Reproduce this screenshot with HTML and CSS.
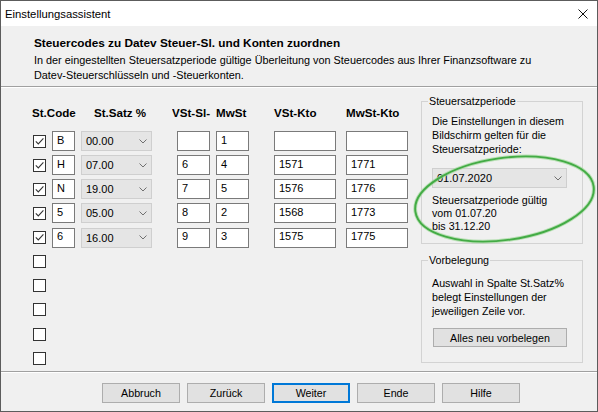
FILE: index.html
```html
<!DOCTYPE html>
<html lang="de">
<head>
<meta charset="utf-8">
<title>Einstellungsassistent</title>
<link rel="stylesheet" href="styles.css">
</head>
<body>
<div class="window">
  <div class="titlebar">
    <span class="title">Einstellungsassistent</span>
    <svg class="close" width="10" height="10" viewBox="0 0 10 10"><path d="M0.5 0.5L9.5 9.5M9.5 0.5L0.5 9.5" stroke="#111" stroke-width="1" fill="none"/></svg>
  </div>
  <div class="header">
    <div class="h-title">Steuercodes zu Datev Steuer-Sl. und Konten zuordnen</div>
    <div class="h-desc">In der eingestellten Steuersatzperiode gültige Überleitung von Steuercodes aus Ihrer Finanzsoftware zu<br>Datev-Steuerschlüsseln und -Steuerkonten.</div>
  </div>
  <div class="sep"></div>
  <div class="main">
    <div class="grid">
      <div class="colheads">
        <span class="ch ch-code">St.Code</span>
        <span class="ch ch-satz">St.Satz %</span>
        <span class="ch ch-vsl">VSt-Sl-</span>
        <span class="ch ch-mwst">MwSt</span>
        <span class="ch ch-vkto">VSt-Kto</span>
        <span class="ch ch-mkto">MwSt-Kto</span>
      </div>
      <div class="rows">
        <div class="row">
          <span class="cb"><svg viewBox="0 0 11 11"><path d="M1.8 5.4L4.3 7.9L9.4 2.4" stroke="#333" stroke-width="1.1" fill="none"/></svg></span>
          <span class="field f-code">B</span>
          <span class="combo f-satz">00.00<svg class="chev" viewBox="0 0 8 5"><path d="M0.5 0.5L4 4L7.5 0.5" stroke="#707070" fill="none"/></svg></span>
          <span class="field f-vsl"></span>
          <span class="field f-mwst">1</span>
          <span class="field f-vkto"></span>
          <span class="field f-mkto"></span>
        </div>
        <div class="row">
          <span class="cb"><svg viewBox="0 0 11 11"><path d="M1.8 5.4L4.3 7.9L9.4 2.4" stroke="#333" stroke-width="1.1" fill="none"/></svg></span>
          <span class="field f-code">H</span>
          <span class="combo f-satz">07.00<svg class="chev" viewBox="0 0 8 5"><path d="M0.5 0.5L4 4L7.5 0.5" stroke="#707070" fill="none"/></svg></span>
          <span class="field f-vsl">6</span>
          <span class="field f-mwst">4</span>
          <span class="field f-vkto">1571</span>
          <span class="field f-mkto">1771</span>
        </div>
        <div class="row">
          <span class="cb"><svg viewBox="0 0 11 11"><path d="M1.8 5.4L4.3 7.9L9.4 2.4" stroke="#333" stroke-width="1.1" fill="none"/></svg></span>
          <span class="field f-code">N</span>
          <span class="combo f-satz">19.00<svg class="chev" viewBox="0 0 8 5"><path d="M0.5 0.5L4 4L7.5 0.5" stroke="#707070" fill="none"/></svg></span>
          <span class="field f-vsl">7</span>
          <span class="field f-mwst">5</span>
          <span class="field f-vkto">1576</span>
          <span class="field f-mkto">1776</span>
        </div>
        <div class="row">
          <span class="cb"><svg viewBox="0 0 11 11"><path d="M1.8 5.4L4.3 7.9L9.4 2.4" stroke="#333" stroke-width="1.1" fill="none"/></svg></span>
          <span class="field f-code">5</span>
          <span class="combo f-satz">05.00<svg class="chev" viewBox="0 0 8 5"><path d="M0.5 0.5L4 4L7.5 0.5" stroke="#707070" fill="none"/></svg></span>
          <span class="field f-vsl">8</span>
          <span class="field f-mwst">2</span>
          <span class="field f-vkto">1568</span>
          <span class="field f-mkto">1773</span>
        </div>
        <div class="row">
          <span class="cb"><svg viewBox="0 0 11 11"><path d="M1.8 5.4L4.3 7.9L9.4 2.4" stroke="#333" stroke-width="1.1" fill="none"/></svg></span>
          <span class="field f-code">6</span>
          <span class="combo f-satz">16.00<svg class="chev" viewBox="0 0 8 5"><path d="M0.5 0.5L4 4L7.5 0.5" stroke="#707070" fill="none"/></svg></span>
          <span class="field f-vsl">9</span>
          <span class="field f-mwst">3</span>
          <span class="field f-vkto">1575</span>
          <span class="field f-mkto">1775</span>
        </div>
        <div class="row"><span class="cb"></span></div>
        <div class="row"><span class="cb"></span></div>
        <div class="row"><span class="cb"></span></div>
        <div class="row"><span class="cb"></span></div>
        <div class="row"><span class="cb"></span></div>
      </div>
    </div>
    <div class="side">
      <fieldset class="group g1">
        <legend>Steuersatzperiode</legend>
        <p class="gtext">Die Einstellungen in diesem<br>Bildschirm gelten für die<br>Steuersatzperiode:</p>
        <div class="combo c-period">01.07.2020<svg class="chev" viewBox="0 0 8 5"><path d="M0.5 0.5L4 4L7.5 0.5" stroke="#707070" fill="none"/></svg></div>
        <p class="gtext valid">Steuersatzperiode gültig<br>vom 01.07.20<br>bis 31.12.20</p>
      </fieldset>
      <fieldset class="group g2">
        <legend>Vorbelegung</legend>
        <p class="gtext">Auswahl in Spalte St.Satz%<br>belegt Einstellungen der<br>jeweiligen Zeile vor.</p>
        <div class="btn btn-wide">Alles neu vorbelegen</div>
      </fieldset>
    </div>
  </div>
  <div class="sep"></div>
  <div class="footer">
    <div class="btn">Abbruch</div>
    <div class="btn">Zurück</div>
    <div class="btn btn-default">Weiter</div>
    <div class="btn">Ende</div>
    <div class="btn">Hilfe</div>
  </div>
  <svg class="mark" width="598" height="412" viewBox="0 0 598 412">
    <ellipse cx="504.5" cy="199" rx="90" ry="41" transform="rotate(-8 504.5 199)" fill="none" stroke="#9fd99a" stroke-width="3.8" opacity="0.7"/>
    <ellipse cx="504.5" cy="199" rx="90" ry="41" transform="rotate(-8 504.5 199)" fill="none" stroke="#43ab45" stroke-width="1.9"/>
  </svg>
</div>
</body>
</html>
```

FILE: styles.css
```css
html, body {
  margin: 0;
  padding: 0;
  background: #f0f0f0;
}

.window {
  position: relative;
  width: 598px;
  height: 412px;
  box-sizing: border-box;
  border: 1px solid #5c5c5c;
  background: #f0f0f0;
  display: flex;
  flex-direction: column;
  font-family: "Liberation Sans", Arial, sans-serif;
  font-size: 10.7px;
  color: #000;
  overflow: hidden;
}

.titlebar {
  height: 25px;
  flex: none;
  background: #fff;
  display: flex;
  align-items: center;
  justify-content: space-between;
  padding: 0 9px 0 4px;
}

.title {
  font-size: 11.3px;
}

.close {
  display: block;
  margin-top: 1px;
}

.header {
  height: 60px;
  flex: none;
  box-sizing: border-box;
  padding: 10px 0 0 33px;
}

.h-title {
  font-weight: bold;
  font-size: 11.8px;
  line-height: 14px;
}

.h-desc {
  margin-top: 3px;
  line-height: 15px;
  font-size: 10.85px;
}

.sep {
  flex: none;
  height: 0;
  border-top: 1px solid #a0a0a0;
  border-bottom: 1px solid #ffffff;
}

.main {
  height: 283px;
  flex: none;
  display: flex;
}

.grid {
  padding: 18px 0 0 32px;
}

.colheads {
  display: flex;
  margin-left: -1px;
  font-weight: bold;
  font-size: 11.6px;
  line-height: 14px;
  white-space: nowrap;
}

.ch { display: block; }
.ch-code { width: 62px; }
.ch-satz { width: 78px; }
.ch-vsl { width: 44px; overflow: hidden; }
.ch-mwst { width: 58px; }
.ch-vkto { width: 72px; }

.rows {
  margin-top: 11px;
  display: flex;
  flex-direction: column;
  gap: 4.15px;
}

.row {
  height: 20px;
  display: flex;
  align-items: center;
}

.cb {
  width: 13px;
  height: 13px;
  box-sizing: border-box;
  border: 1px solid #333;
  background: #fff;
  display: block;
}

.cb svg {
  display: block;
  width: 11px;
  height: 11px;
}

.field {
  height: 20px;
  box-sizing: border-box;
  border: 1px solid #7a7a7a;
  background: #fff;
  padding: 0 0 3px 4px;
  display: flex;
  align-items: center;
  font-size: 11px;
}

.f-code { width: 23px; margin-left: 6px; }
.f-vsl { width: 33px; margin-left: 25px; }
.f-mwst { width: 33px; margin-left: 6px; }
.f-vkto { width: 62px; margin-left: 25px; }
.f-mkto { width: 62px; margin-left: 10px; }

.combo {
  height: 20px;
  box-sizing: border-box;
  border: 1px solid #cfcfcf;
  background: #e5e5e5;
  display: flex;
  align-items: center;
  justify-content: space-between;
  padding: 0 4px 0 4px;
  font-size: 11px;
}

.f-satz {
  width: 71px;
  margin-left: 6px;
}

.chev {
  display: block;
  width: 8px;
  height: 5px;
}

.side {
  margin-left: auto;
  margin-right: 14px;
  width: 162px;
  padding-top: 7px;
}

.group {
  margin: 0;
  width: 162px;
  box-sizing: border-box;
  border: 1px solid #d3d3d3;
  padding: 7px 15px 10px 10px;
  min-inline-size: 0;
}

.group legend {
  padding: 0 1px;
  margin-left: -4px;
  line-height: 12.2px;
}

.gtext {
  margin: 0;
  line-height: 14px;
  white-space: nowrap;
}

.c-period {
  margin-top: 12px;
  width: 135px;
  padding-left: 4px;
}

.valid {
  margin-top: 6px;
  line-height: 13px;
}

.g2 {
  margin-top: 10px;
  padding-top: 10px;
  padding-bottom: 15px;
}

.btn {
  width: 78px;
  height: 20px;
  box-sizing: border-box;
  border: 1px solid #adadad;
  background: #e1e1e1;
  display: flex;
  align-items: center;
  justify-content: center;
}

.btn-wide {
  width: 134px;
  height: 19px;
  margin-top: 10px;
  margin-left: 1px;
}

.btn-default {
  border: 2px solid #0078d7;
}

.footer {
  flex: 1;
  display: flex;
  gap: 7px;
  padding: 10px 0 0 101px;
}

.mark {
  position: absolute;
  left: -1px;
  top: -1px;
  pointer-events: none;
}
```
